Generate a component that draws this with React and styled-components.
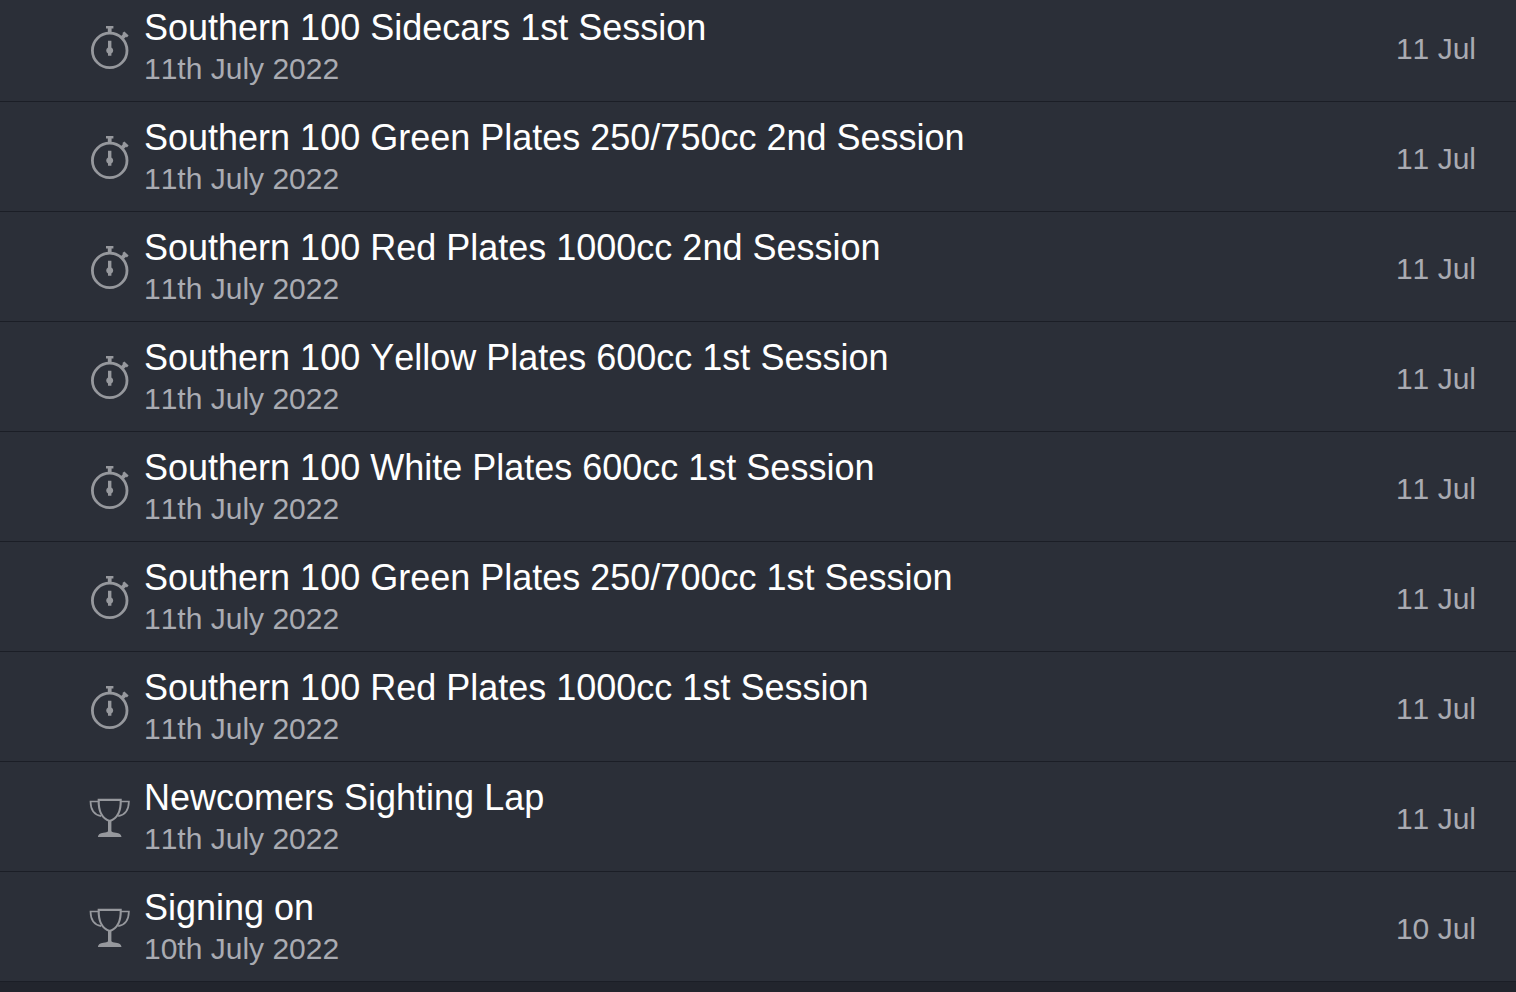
import React from 'react'
import styled, { createGlobalStyle } from 'styled-components'

const sessions = [
    { id: 1, type: 'timed', title: 'Southern 100 Sidecars 1st Session', date: '11th July 2022', day: '11 Jul' },
    { id: 2, type: 'timed', title: 'Southern 100 Green Plates 250/750cc 2nd Session', date: '11th July 2022', day: '11 Jul' },
    { id: 3, type: 'timed', title: 'Southern 100 Red Plates 1000cc 2nd Session', date: '11th July 2022', day: '11 Jul' },
    { id: 4, type: 'timed', title: 'Southern 100 Yellow Plates 600cc 1st Session', date: '11th July 2022', day: '11 Jul' },
    { id: 5, type: 'timed', title: 'Southern 100 White Plates 600cc 1st Session', date: '11th July 2022', day: '11 Jul' },
    { id: 6, type: 'timed', title: 'Southern 100 Green Plates 250/700cc 1st Session', date: '11th July 2022', day: '11 Jul' },
    { id: 7, type: 'timed', title: 'Southern 100 Red Plates 1000cc 1st Session', date: '11th July 2022', day: '11 Jul' },
    { id: 8, type: 'event', title: 'Newcomers Sighting Lap', date: '11th July 2022', day: '11 Jul' },
    { id: 9, type: 'event', title: 'Signing on', date: '10th July 2022', day: '10 Jul' },
]

function Stopwatch() {
    return (
        <Icon viewBox="0 -3 44 48" aria-hidden="true">
            <circle cx="21.7" cy="25.4" r="17.3" fill="none" stroke="currentColor" strokeWidth="2.8" />
            <path d="M18 1h7.400v2.600h-1.800v5h-3.800v-5H18z" fill="currentColor" />
            <path d="M32 12.200l3-3.200-.6-.9 2-1.700 4.200 4.200-1.700 1.800-.9-.6-3.200 3.200z" fill="currentColor" />
            <path d="M20 15.800h3.400v6.800a3.400 3.400 0 0 1 0 6v2.200H20v-2.200a3.400 3.400 0 0 1 0-6z" fill="currentColor" />
        </Icon>
    )
}

function Trophy() {
    return (
        <Icon viewBox="0 -3 44 48" aria-hidden="true">
            <g fill="none" stroke="currentColor">
                <path d="M10.700 4.900h22c.4 11.300-2.600 18.300-11 21.200-8.400-2.900-11.400-9.900-11-21.200z" strokeWidth="2.100" />
                <path d="M10.700 6.500H2.500c.2 8.200 3.600 13.600 10.700 14.600M32.700 6.500h8.200c-.2 8.200-3.600 13.600-10.700 14.600" strokeWidth="1.700" />
                <path d="M21.700 26v13" strokeWidth="3.400" />
            </g>
            <path d="M9.900 42.100c.3-2.900 2-4.100 5.500-4.400 2.400-.2 3.900-.6 4.800-1.500h3c.9.900 2.400 1.300 4.800 1.500 3.500.3 5.200 1.500 5.500 4.400z" fill="currentColor" />
        </Icon>
    )
}

function App() {
    return (
        <>
            <GlobalStyle />
            <SessionList>
                {sessions.map((obj) => (
                    <Row key={obj.id}>
                        {obj.type === 'timed' ? <Stopwatch /> : <Trophy />}
                        <Details>
                            <Title>{obj.title}</Title>
                            <DateText>{obj.date}</DateText>
                        </Details>
                        <Day>{obj.day}</Day>
                    </Row>
                ))}
            </SessionList>
        </>
    )
}

export default App

const GlobalStyle = createGlobalStyle`
    body {
        margin: 0;
        overflow: hidden;
        background: #22252d;
        font-family: "Liberation Sans", Arial, sans-serif;
        font-kerning: none;
    }
`
/* the list is scrolled a little way into its first row */
const SessionList = styled.ul`
    list-style: none;
    margin: -8px 0 0;
    padding: 0;
`
const Row = styled.li`
    display: flex;
    align-items: center;
    padding: 13px 40px 14px 88px;
    background: #2b2f38;
    border-bottom: 1px solid #1b1e26;
`
const Icon = styled.svg`
    flex: none;
    width: 44px;
    height: 48px;
    margin-right: 12px;
    color: #96989d;
`
const Details = styled.div`
    flex: 1;
    min-width: 0;
`
const Title = styled.h2`
    margin: 0;
    color: #fff;
    font-size: 36px;
    font-weight: 400;
    line-height: 46px;
`
const DateText = styled.p`
    margin: 0;
    color: #a9abb2;
    font-size: 30px;
    line-height: 36px;
`
const Day = styled.span`
    flex: none;
    margin-left: 24px;
    padding-top: 6px;
    color: #a9abb2;
    font-size: 30px;
    line-height: 36px;
`
